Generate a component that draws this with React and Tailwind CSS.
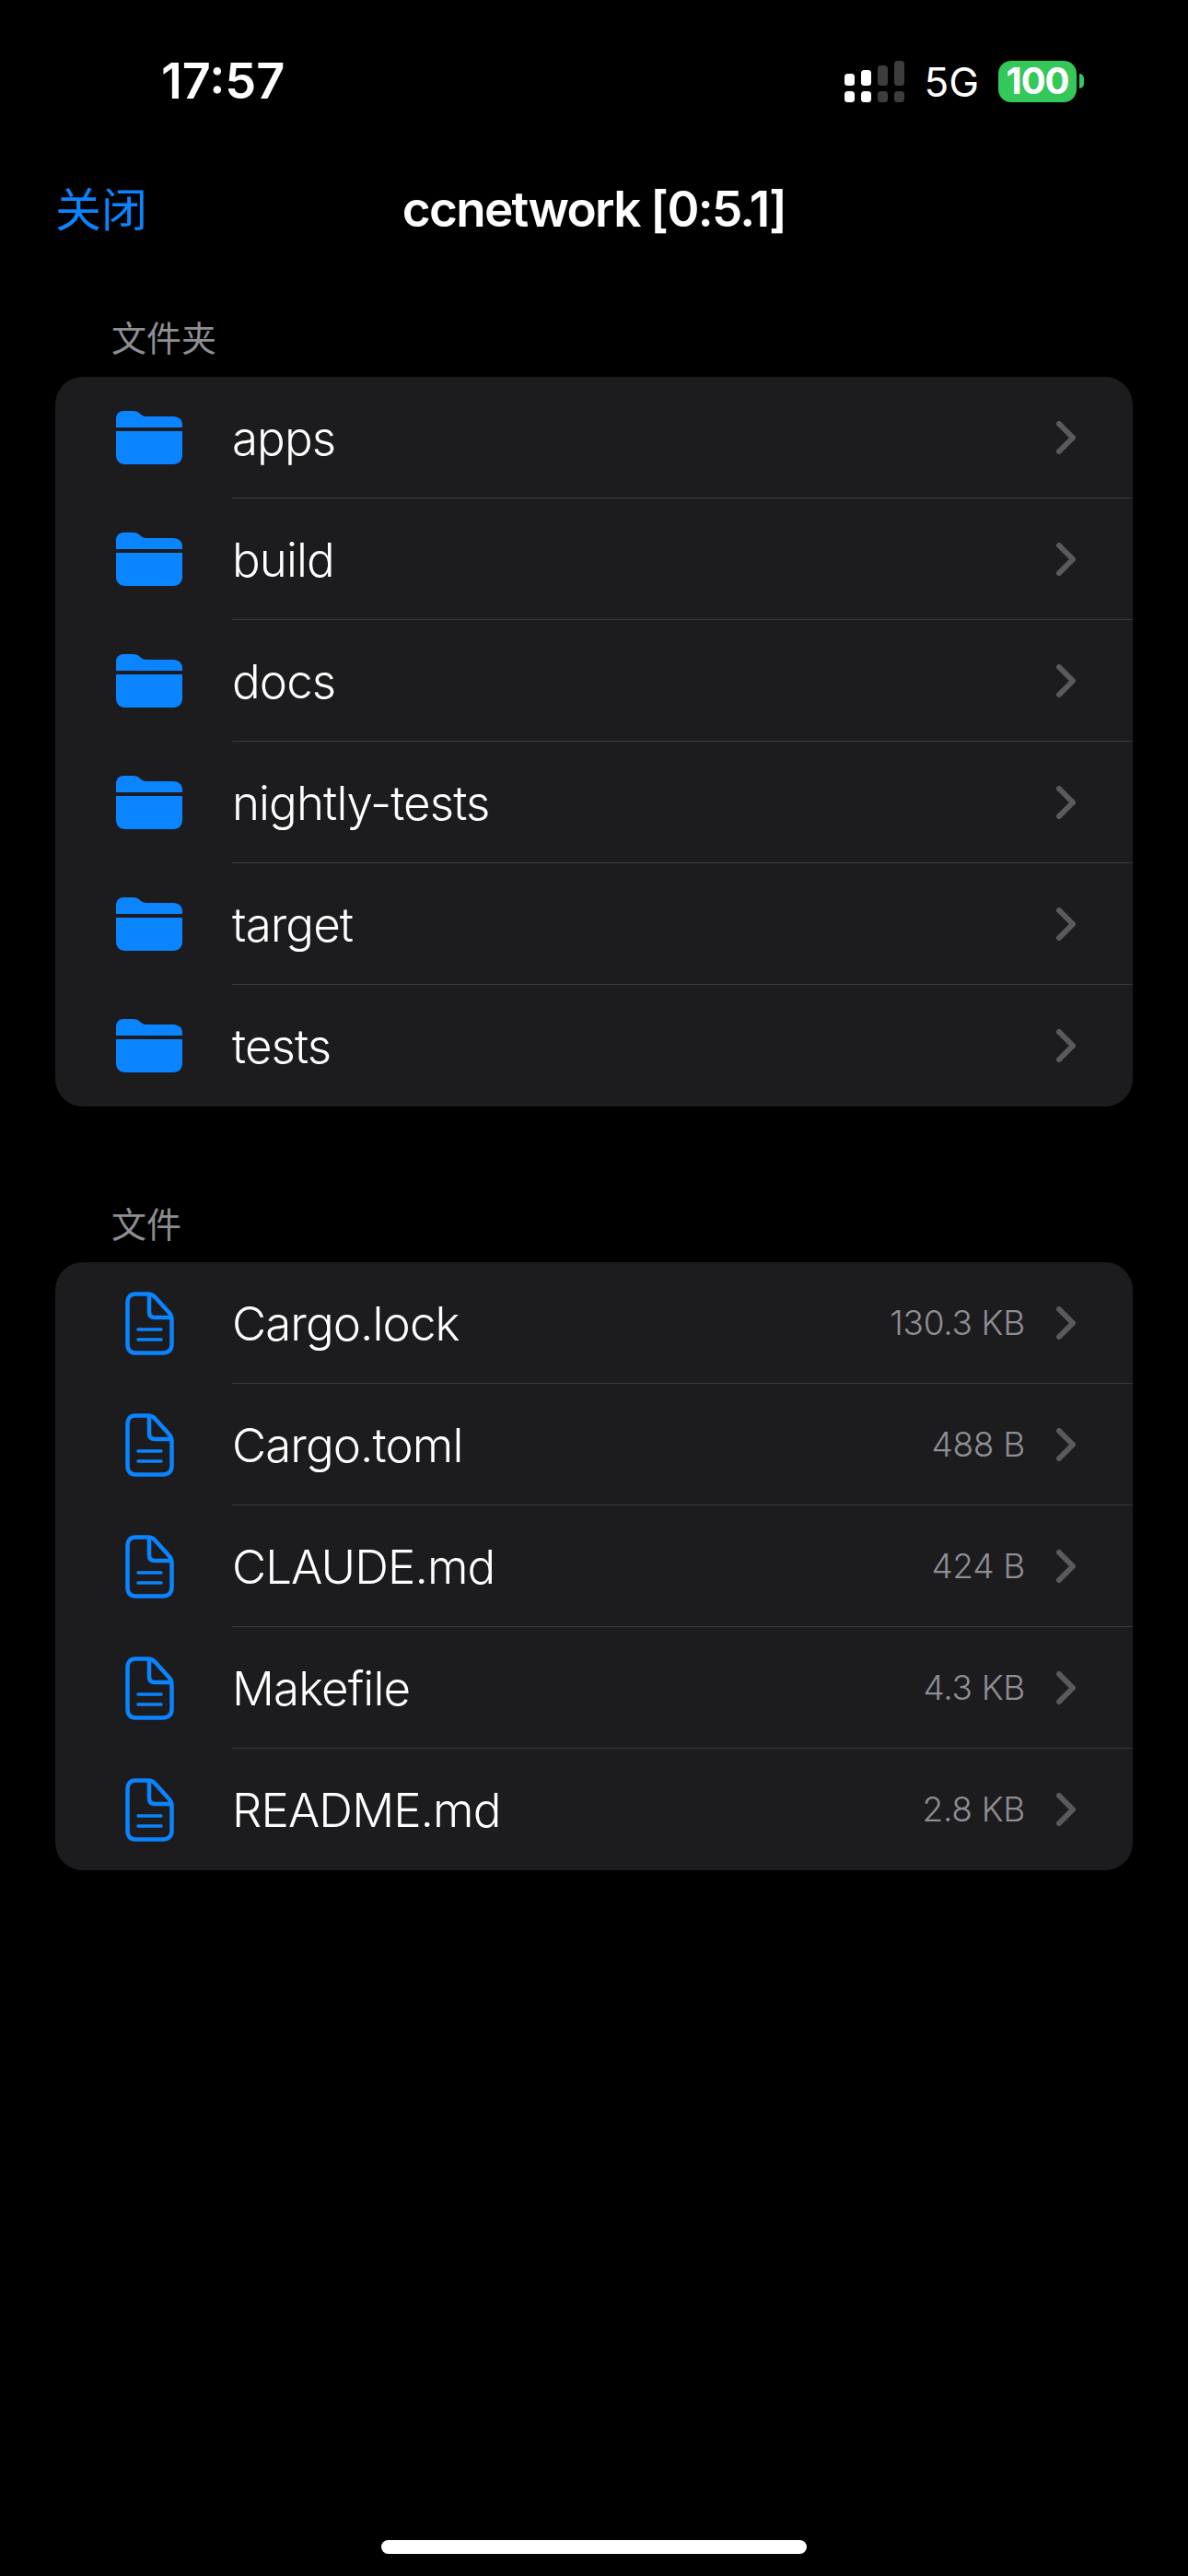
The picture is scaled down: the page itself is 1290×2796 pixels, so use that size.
import React from 'react';

const folders = ['apps', 'build', 'docs', 'nightly-tests', 'target', 'tests'];
const files = [
  { name: 'Cargo.lock', size: '130.3 KB' },
  { name: 'Cargo.toml', size: '488 B' },
  { name: 'CLAUDE.md', size: '424 B' },
  { name: 'Makefile', size: '4.3 KB' },
  { name: 'README.md', size: '2.8 KB' },
];

function FolderIcon() {
  return (
    <svg width="72" height="58" viewBox="0 0 72 58" fill="#0a84ff">
      <path d="M0 18V9C0 3.5 3 0 8 0H18C22 0 24 1 26 3C28 5 30 6 33 6H62C68 6 72 9.500 72 15V18Z" />
      <path d="M0 22H72V48C72 54 68 58 62 58H10C4 58 0 54 0 48Z" />
    </svg>
  );
}

function FileIcon() {
  return (
    <svg width="53" height="69" viewBox="0 0 53 69" fill="none" stroke="#0a84ff" strokeWidth="4.5" strokeLinecap="round" strokeLinejoin="round">
      <path d="M11 2.500H25C28 2.500 30 3.500 32 5.500L47 22C49.500 24.500 50.500 26.500 50.500 30V57C50.500 63 47 66.500 41 66.500H11C5.500 66.500 2.500 63 2.500 57V12C2.500 6 5.500 2.500 11 2.500Z" />
      <path d="M26 3V22C26 26 28 28 32 28H50" />
      <path d="M14 41H39M14 52H39" strokeWidth="3.500" />
    </svg>
  );
}

function Chevron() {
  return (
    <svg width="21" height="36" viewBox="0 0 21 36" fill="none" stroke="#5a5a5e" strokeWidth="6" strokeLinecap="round" strokeLinejoin="round">
      <path d="M3 3L18 18L3 33" />
    </svg>
  );
}

function SignalIcon() {
  return (
    <svg width="65" height="45" viewBox="0 0 65 45">
      <rect x="0" y="33" width="11" height="12" rx="3.500" fill="#fff" />
      <rect x="18" y="33" width="11" height="12" rx="3.500" fill="#fff" />
      <rect x="36" y="33" width="11" height="12" rx="3.500" fill="#3d3d3d" />
      <rect x="54" y="33" width="11" height="12" rx="3.500" fill="#3d3d3d" />
      <rect x="0" y="14" width="11" height="13" rx="3.500" fill="#fff" />
      <rect x="18" y="10" width="11" height="17" rx="3.500" fill="#fff" />
      <rect x="36" y="5" width="11" height="22" rx="3.500" fill="#3d3d3d" />
      <rect x="54" y="0" width="11" height="27" rx="3.500" fill="#3d3d3d" />
    </svg>
  );
}

function Row({ icon, name, size, last }) {
  return (
    <div className="flex h-[132px] items-stretch">
      <div className="ml-[66px] mr-[54px] flex w-[72px] items-center justify-center">{icon}</div>
      <div className={`flex flex-1 items-center pr-[62px] ${last ? '' : 'border-b border-[#3a3a3c]'}`}>
        <span className="flex-1 pt-[3px] text-[51px] font-[350] tracking-[-0.9px] text-white">{name}</span>
        {size && <span className="mr-[34px] text-[37px] font-[350] tracking-[-0.3px] text-[#8e8e93]">{size}</span>}
        <Chevron />
      </div>
    </div>
  );
}

export default function App() {
  return (
    <div className="flex h-[2796px] w-[1290px] flex-col overflow-hidden bg-black font-['Inter','Noto_Sans_CJK_SC',sans-serif]">
      {/* status bar */}
      <div className="flex h-[121px] items-start justify-between pl-[175px] pr-[113px] pt-[55px]">
        <span className="text-[54px] font-semibold leading-[66px] text-white">17:57</span>
        <div className="mt-[9px] flex items-center">
          <SignalIcon />
          <span className="ml-[21px] pt-[3px] text-[44px] leading-[45px] text-white">5G</span>
          <div className="ml-[21px] flex h-[45px] w-[85px] items-center justify-center rounded-[14px] bg-[#34c759] text-[40px] font-bold leading-none tracking-[-1px] text-white">100</div>
          <div className="ml-[3px] h-[16px] w-[5px] rounded-r-full bg-[#34c759]" />
        </div>
      </div>

      {/* nav */}
      <div className="relative mt-[72px] flex h-[70px] items-center justify-center">
        <span className="absolute left-[60px] text-[50px] text-[#0a84ff]">关闭</span>
        <span className="text-[53px] font-semibold tracking-[-1.7px] text-white">ccnetwork [0:5.1]</span>
      </div>

      <div className="px-[60px]">
        <div className="mt-[73px] pl-[61px] text-[38px] leading-[62px] text-[#8e8e93]">文件夹</div>
        <div className="mt-[11px] overflow-hidden rounded-[30px] bg-[#1c1c1e]">
          {folders.map((name, i) => (
            <Row key={name} icon={<FolderIcon />} name={name} last={i === folders.length - 1} />
          ))}
        </div>

        <div className="mt-[97px] pl-[61px] text-[38px] leading-[62px] text-[#8e8e93]">文件</div>
        <div className="mt-[10px] overflow-hidden rounded-[30px] bg-[#1c1c1e]">
          {files.map((file, i) => (
            <Row key={file.name} icon={<FileIcon />} name={file.name} size={file.size} last={i === files.length - 1} />
          ))}
        </div>
      </div>

      {/* home indicator */}
      <div className="mt-auto mb-[24px] h-[15px] w-[462px] self-center rounded-full bg-white" />
    </div>
  );
}
